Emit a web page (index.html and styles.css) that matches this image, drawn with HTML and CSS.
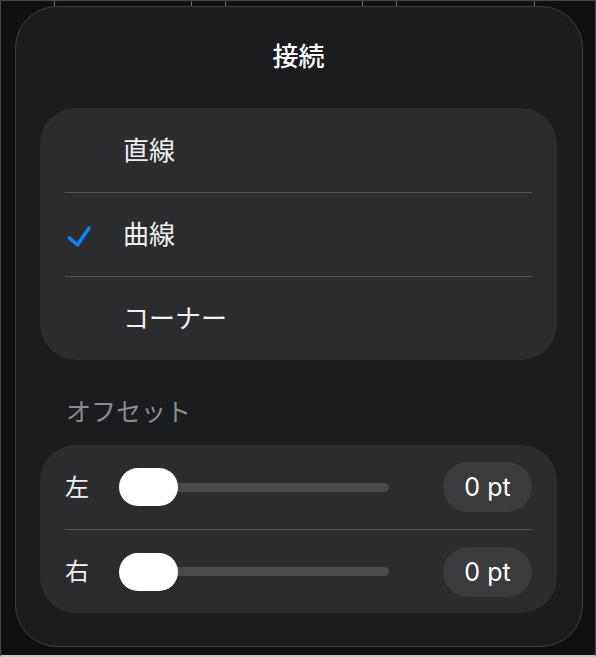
FILE: index.html
```html
<!DOCTYPE html>
<html lang="ja">
<head>
<meta charset="utf-8">
<link rel="stylesheet" href="styles.css">
</head>
<body>
<div class="screen">
  <div class="bg-table">
    <div class="cell c1"></div>
    <div class="cell c2"></div>
    <div class="cell c3"></div>
    <div class="cell c4"></div>
    <div class="cell c5"></div>
    <div class="cell c6"></div>
    <div class="cell c7"></div>
  </div>
  <div class="popover">
    <div class="title">接続</div>
    <div class="card">
      <div class="row option"><span class="check"></span><span class="label">直線</span></div>
      <div class="row option"><span class="check"><svg width="26" height="24" viewBox="0 0 26 24"><path d="M3.5 15 L11.5 22 L23 5" fill="none" stroke="#0a84ff" stroke-width="3.6" stroke-linecap="round" stroke-linejoin="round"/></svg></span><span class="label">曲線</span></div>
      <div class="row option"><span class="check"></span><span class="label">コーナー</span></div>
    </div>
    <div class="section-header">オフセット</div>
    <div class="card">
      <div class="row slider-row">
        <span class="side">左</span>
        <div class="slider"><div class="track"></div><div class="thumb"></div></div>
        <span class="value">0 pt</span>
      </div>
      <div class="row slider-row">
        <span class="side">右</span>
        <div class="slider"><div class="track"></div><div class="thumb"></div></div>
        <span class="value">0 pt</span>
      </div>
    </div>
  </div>
</div>
</body>
</html>
```

FILE: styles.css
```css
html, body {
  margin: 0;
  padding: 0;
  background: #0f1011;
}
body {
  font-family: "Noto Sans CJK JP", "Inter", sans-serif;
  color: #f2f2f2;
}
.screen {
  position: relative;
  width: 596px;
  height: 657px;
  box-sizing: border-box;
  border: 1px solid #48494b;
  border-bottom: 2px solid #c9c9c9;
  background: #0f1011;
  overflow: hidden;
}
.bg-table {
  display: flex;
  height: 6px;
}
.cell {
  height: 100%;
  border-right: 1px solid #6a6b6d;
}
.c1 { width: 53px; }
.c2 { width: 136px; }
.c3 { width: 33px; }
.c4 { width: 136px; }
.c5 { width: 33px; }
.c6 { width: 137px; }
.c7 { flex: 1; border-right: none; }

.popover {
  position: absolute;
  left: 14px;
  top: 5px;
  width: 568px;
  height: 641px;
  box-sizing: border-box;
  background: #1b1c1d;
  border: 1px solid #3e3f41;
  border-radius: 42px;
  padding: 33px 25px 0 24px;
  display: flex;
  flex-direction: column;
}
.title {
  height: 30px;
  line-height: 30px;
  text-align: center;
  font-size: 26px;
  font-weight: 500;
  color: #ffffff;
  margin-bottom: 38px;
}
.card {
  background: #2c2c2e;
  border-radius: 36px;
  display: flex;
  flex-direction: column;
  padding: 0 25px;
}
.row {
  height: 84px;
  display: flex;
  align-items: center;
  box-sizing: border-box;
}
.row + .row {
  border-top: 1px solid #535356;
}
.option .check {
  width: 57px;
  display: flex;
  align-items: center;
  padding-left: 1px;
}
.option .check svg { display: block; }
.label {
  font-size: 26px;
  line-height: 1;
  padding-bottom: 3px;
  color: #f0f0f0;
}
.section-header {
  font-size: 25px;
  color: #8c8c91;
  height: 30px;
  line-height: 30px;
  margin: 35px 0 20px 26px;
}
.side {
  font-size: 24px;
  line-height: 1;
  padding-bottom: 3px;
  width: 54px;
  color: #f0f0f0;
}
.slider {
  position: relative;
  width: 270px;
  height: 38px;
  display: flex;
  align-items: center;
}
.track {
  width: 100%;
  height: 9px;
  border-radius: 5px;
  background: #4a4a4d;
}
.thumb {
  position: absolute;
  left: 0;
  top: 0;
  width: 59px;
  height: 38px;
  border-radius: 19px;
  background: #ffffff;
}
.value {
  margin-left: auto;
  width: 89px;
  height: 50px;
  border-radius: 25px;
  background: #3b3b3e;
  display: flex;
  align-items: center;
  justify-content: center;
  font-family: "Inter", "Noto Sans", sans-serif;
  font-size: 25px;
  color: #ffffff;
}
```
